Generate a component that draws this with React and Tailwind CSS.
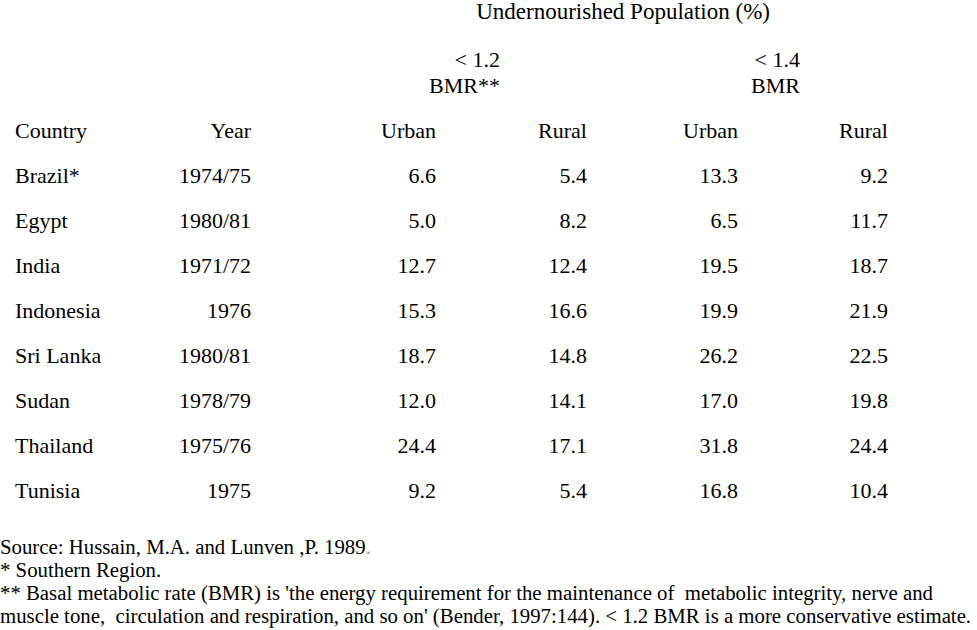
import React from 'react';

const rows = [
    ['Brazil*', '1974/75', '6.6', '5.4', '13.3', '9.2'],
    ['Egypt', '1980/81', '5.0', '8.2', '6.5', '11.7'],
    ['India', '1971/72', '12.7', '12.4', '19.5', '18.7'],
    ['Indonesia', '1976', '15.3', '16.6', '19.9', '21.9'],
    ['Sri Lanka', '1980/81', '18.7', '14.8', '26.2', '22.5'],
    ['Sudan', '1978/79', '12.0', '14.1', '17.0', '19.8'],
    ['Thailand', '1975/76', '24.4', '17.1', '31.8', '24.4'],
    ['Tunisia', '1975', '9.2', '5.4', '16.8', '10.4'],
];

const Row = ({ cells }) => (
    <div className="grid h-[45px] grid-cols-[160px_91px_185px_151px_151px_150px] items-center">
        <div className="pl-[15px] text-left">{cells[0]}</div>
        {cells.slice(1).map((c, i) => (
            <div key={i} className="text-right">{c}</div>
        ))}
    </div>
);

const App = () => {
    return (
        <div className="h-[630px] w-[977px] overflow-hidden bg-white text-black font-['Liberation_Serif',serif]">
            <div className="text-[22px] leading-[24px]">
                <div className="w-[770px] text-right text-[23px]">Undernourished Population (%)</div>

                <div className="mt-[23px] flex leading-[26px]">
                    <div className="w-[500px] text-right">
                        <div>&lt; 1.2</div>
                        <div>BMR**</div>
                    </div>
                    <div className="w-[300px] text-right">
                        <div>&lt; 1.4</div>
                        <div>BMR</div>
                    </div>
                </div>

                <div className="mt-[9px]">
                    <Row cells={['Country', 'Year', 'Urban', 'Rural', 'Urban', 'Rural']} />
                    {rows.map((r) => (
                        <Row key={r[0]} cells={r} />
                    ))}
                </div>
            </div>

            <div className="mt-[22px] text-[20.8px] leading-[23px] whitespace-pre">
                <div>Source: Hussain, M.A. and Lunven ,P. 1989<span className="text-gray-400">.</span></div>
                <div>* Southern Region.</div>
                <div>** Basal metabolic rate (BMR) is 'the energy requirement for the maintenance of  metabolic integrity, nerve and</div>
                <div>muscle tone,  circulation and respiration, and so on' (Bender, 1997:144). &lt; 1.2 BMR is a more conservative estimate.</div>
            </div>
        </div>
    );
};

export default App;
